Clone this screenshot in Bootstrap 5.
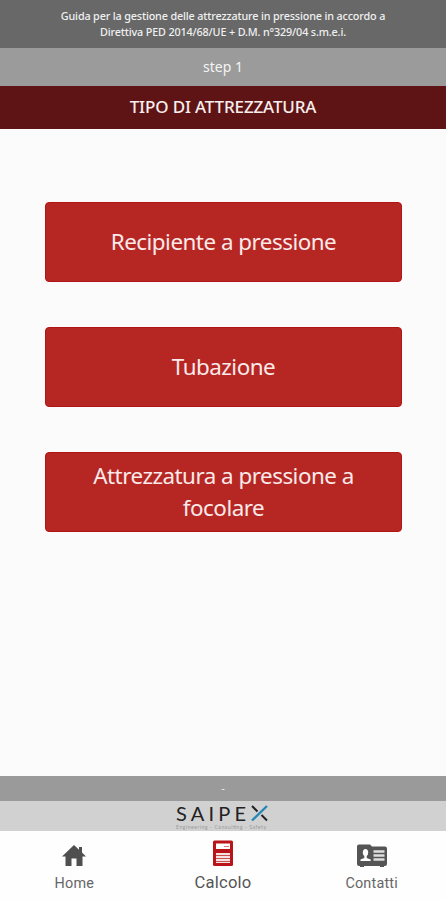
<!DOCTYPE html>
<html lang="it">
<head>
<meta charset="utf-8">
<meta name="viewport" content="width=device-width, initial-scale=1">
<title>Tipo di attrezzatura</title>
<link rel="stylesheet" href="https://cdn.jsdelivr.net/npm/bootstrap@5.3.0/dist/css/bootstrap.min.css">
<style>
body{font-family:"Noto Sans","Open Sans",sans-serif;background:#fbfbfb}
.guide{height:48px;background:#686868;color:#f0f0f0;font-size:10.8px;line-height:16px;padding-top:8px;font-weight:500;letter-spacing:-.15px}
.step-bar{height:38px;background:#9b9b9b;color:#f4f4f4;font-size:14px;padding-bottom:1px}
.title-bar{height:43px;background:#5e1414;color:#f7eeee;font-size:17px;font-weight:500;letter-spacing:-.15px;padding-bottom:1px}
.choices{padding:73px 44px 0 45px;gap:45px}
.btn-choice{--bs-btn-color:#fbeaea;--bs-btn-bg:#b62724;--bs-btn-border-color:#b11414;--bs-btn-hover-color:#fff;--bs-btn-hover-bg:#a3201e;--bs-btn-hover-border-color:#a3201e;--bs-btn-border-radius:4px;height:80px;font-size:22.4px;letter-spacing:-.5px;line-height:32px;padding:0 36px}
.status-bar{height:25px;background:#9a9a9a;color:#eee;font-size:11px;padding-bottom:1px}
.brand-bar{height:30px;background:#d1d1d1}
.brand-bar svg{overflow:visible}
.tabs{height:69px;background:#fefefe}
.tab{color:#666;font-family:Roboto,sans-serif;font-size:14.4px;letter-spacing:.2px;line-height:18px;padding-top:10px}
.tab svg{display:block;margin:0 auto 8px}
.tab.current{color:#555;font-size:16.6px;padding-top:9px}
</style>
</head>
<body>
<div class="d-flex flex-column vh-100 overflow-hidden">
  <header class="text-center flex-shrink-0">
    <div class="guide">Guida per la gestione delle attrezzature in pressione in accordo a<br>Direttiva PED 2014/68/UE + D.M. n°329/04 s.m.e.i.</div>
    <div class="step-bar d-flex align-items-center justify-content-center">step 1</div>
    <h1 class="title-bar d-flex align-items-center justify-content-center m-0">TIPO DI ATTREZZATURA</h1>
  </header>
  <main class="choices d-flex flex-column flex-grow-1">
    <button type="button" class="btn btn-choice">Recipiente a pressione</button>
    <button type="button" class="btn btn-choice">Tubazione</button>
    <button type="button" class="btn btn-choice">Attrezzatura a pressione a focolare</button>
  </main>
  <footer class="flex-shrink-0">
    <div class="status-bar d-flex align-items-center justify-content-center">-</div>
    <div class="brand-bar d-flex justify-content-center">
      <svg width="94" height="30" viewBox="0 0 94 30" role="img" aria-label="SAIPEX">
        <text x="0" y="19.500" textLength="70" fill="#222" font-family="Lato, sans-serif" font-size="20">SAIPE</text>
        <path d="M76 5l5.500 5.500M85.500 14l5.500 5.500" stroke="#222" stroke-width="2" fill="none"/>
        <path d="M91 5L76 19.500" stroke="#2388b8" stroke-width="2.400" fill="none"/>
        <text x="0" y="28" textLength="90" fill="#999" font-family="Lato, sans-serif" font-size="5">Engineering - Consulting - Safety</text>
      </svg>
    </div>
    <nav class="tabs row g-0 text-center">
      <a href="#" class="tab col text-decoration-none">
        <svg width="26" height="26" viewBox="1 0 26 26" fill="#4f4f4f"><path d="M14 4L2 15.500h3.500V25h6v-7.500h5V25h6v-9.500H26l-4-4V6h-3v2.700z"/></svg>Home</a>
      <a href="#" class="tab current col text-decoration-none">
        <svg width="20" height="26" viewBox="0 0 20 26"><rect width="20" height="25.500" y=".5" rx="1.500" fill="#b9141a"/><path d="M3 3.500h14v5.500H3z" fill="#fff"/><path d="M11 6.500h5" stroke="#d87a7c"/><path d="M3 13h14v10H3z" fill="#f6e2e0"/><path d="M3 15.500h14M3 18.500h14M3 21.500h14" stroke="#c8504f"/></svg>Calcolo</a>
      <a href="#" class="tab col text-decoration-none">
        <svg width="30" height="26" viewBox="0 0 30 26"><path d="M2 3.500h11l2 2h13q2 0 2 2V23q0 2-2 2h-1v1h-4v-1H7v1H3v-1H2q-2 0-2-2V5.500q0-2 2-2z" fill="#555"/><ellipse cx="8.500" cy="11.500" rx="2.700" ry="3.500" fill="#fff"/><path d="M7.300 13h2.400v4l4 1.500V20H3.500v-1.500l3.800-1.500z" fill="#fff"/><path d="M16.500 10.500h11M16.500 14.500h11M16.500 18.500h11" stroke="#dedede" stroke-width="2.300"/></svg>Contatti</a>
    </nav>
  </footer>
</div>
<script src="https://cdn.jsdelivr.net/npm/bootstrap@5.3.0/dist/js/bootstrap.bundle.min.js"></script>
</body>
</html>
